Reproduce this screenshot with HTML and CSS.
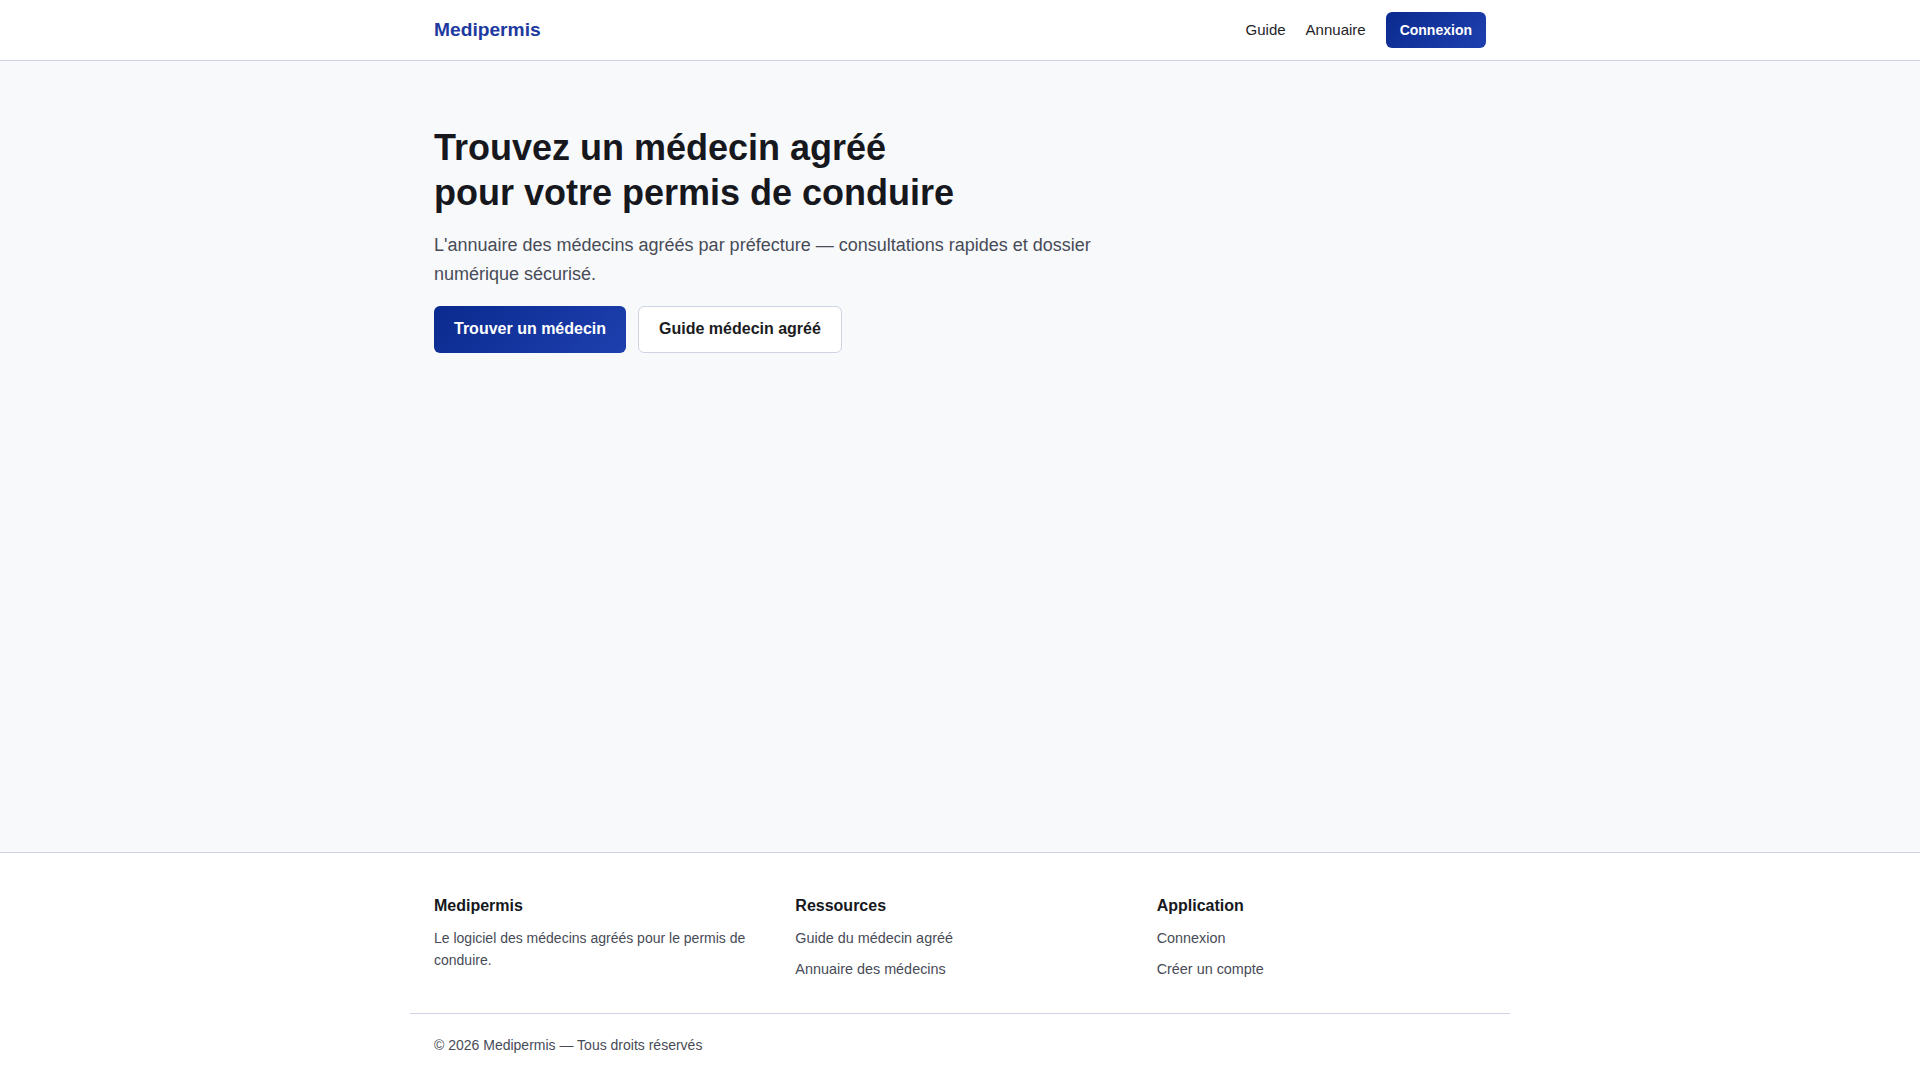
FILE: index.html
```html
<!DOCTYPE html>
<html lang="fr">
<head>
<meta charset="utf-8">
<title>Medipermis — Trouvez un médecin agréé</title>
<link rel="stylesheet" href="styles.css">
</head>
<body>
<header class="site-header">
  <div class="container header-inner">
    <a class="logo" href="#">Medipermis</a>
    <nav class="nav">
      <a class="nav-link" href="#">Guide</a>
      <a class="nav-link" href="#">Annuaire</a>
      <a class="btn-login" href="#">Connexion</a>
    </nav>
  </div>
</header>
<main class="main">
  <section class="container hero">
    <h1 class="hero-title">Trouvez un médecin agréé<br>pour votre permis de conduire</h1>
    <p class="hero-text">L'annuaire des médecins agréés par préfecture — consultations rapides et dossier numérique sécurisé.</p>
    <div class="hero-actions">
      <a class="btn btn-primary" href="#">Trouver un médecin</a>
      <a class="btn btn-secondary" href="#">Guide médecin agréé</a>
    </div>
  </section>
</main>
<footer class="site-footer">
  <div class="container footer-grid">
    <div class="footer-col">
      <h3 class="footer-title">Medipermis</h3>
      <p class="footer-text">Le logiciel des médecins agréés pour le permis de conduire.</p>
    </div>
    <div class="footer-col">
      <h3 class="footer-title">Ressources</h3>
      <ul class="footer-links">
        <li><a href="#">Guide du médecin agréé</a></li>
        <li><a href="#">Annuaire des médecins</a></li>
      </ul>
    </div>
    <div class="footer-col">
      <h3 class="footer-title">Application</h3>
      <ul class="footer-links">
        <li><a href="#">Connexion</a></li>
        <li><a href="#">Créer un compte</a></li>
      </ul>
    </div>
  </div>
  <div class="footer-bottom">
    <p class="copyright">© 2026 Medipermis — Tous droits réservés</p>
  </div>
</footer>
</body>
</html>
```

FILE: styles.css
```css
* { box-sizing: border-box; }
html, body { margin: 0; padding: 0; }
body {
  font-family: "Liberation Sans", Arial, sans-serif;
  color: #111827;
  background: #f8f9fb;
  min-height: 100vh;
  display: flex;
  flex-direction: column;
}
a { text-decoration: none; color: inherit; }

.container {
  max-width: 1100px;
  margin: 0 auto;
  padding: 0 24px;
  width: 100%;
}

.site-header {
  background: #ffffff;
  border-bottom: 1px solid #cfd3e4;
  height: 61px;
}
.header-inner {
  height: 60px;
  display: flex;
  align-items: center;
  justify-content: space-between;
}
.logo {
  font-size: 19.2px;
  font-weight: 700;
  color: #1e3a9f;
}
.nav {
  display: flex;
  align-items: center;
  gap: 20px;
}
.nav-link {
  font-size: 15px;
  line-height: 20px;
  color: #1f2328;
  margin-top: -1px;
}
.btn-login {
  display: inline-flex;
  align-items: center;
  height: 36px;
  padding: 0 14px;
  border-radius: 6px;
  font-size: 14px;
  font-weight: 700;
  color: #ffffff;
  background: linear-gradient(135deg, #0a2a8e, #1e40af);
}

.main { flex: 1; }
.hero {
  padding-top: 64px;
}
.hero-title {
  margin: 0;
  font-size: 36px;
  line-height: 45px;
  font-weight: 700;
  color: #16181d;
}
.hero-text {
  margin: 16px 0 0;
  max-width: 680px;
  font-size: 18px;
  line-height: 1.6;
  color: #474b57;
}
.hero-actions {
  margin-top: 17px;
  display: flex;
  gap: 12px;
}
.btn {
  display: inline-flex;
  align-items: center;
  height: 47px;
  padding: 0 20px;
  border-radius: 6px;
  font-size: 16px;
  font-weight: 700;
}
.btn-primary {
  color: #ffffff;
  background: linear-gradient(135deg, #0a2a8e, #1e40af);
}
.btn-secondary {
  color: #1a1c21;
  background: #ffffff;
  border: 1px solid #cfd3e4;
}

.site-footer {
  background: #ffffff;
  border-top: 1px solid #cfd3e4;
}
.footer-grid {
  display: grid;
  grid-template-columns: repeat(3, 1fr);
  gap: 32px;
  padding-top: 41px;
  padding-bottom: 32px;
}
.footer-title {
  margin: 0 0 9px;
  font-size: 16px;
  line-height: 24px;
  font-weight: 700;
  color: #16181d;
}
.footer-text {
  margin: 0;
  font-size: 14px;
  line-height: 1.6;
  color: #474b57;
}
.footer-links {
  list-style: none;
  margin: 0;
  padding: 0;
  display: flex;
  flex-direction: column;
  gap: 8px;
  font-size: 14.4px;
  line-height: 22.4px;
  color: #474b57;
}
.footer-links li { line-height: 23px; }
.footer-bottom {
  max-width: 1100px;
  margin: 0 auto;
  width: 100%;
  border-top: 1px solid #cfd3e4;
  padding: 20px 24px 24px;
}
.copyright {
  margin: 0;
  font-size: 14px;
  line-height: 1.6;
  color: #474b57;
}
```
